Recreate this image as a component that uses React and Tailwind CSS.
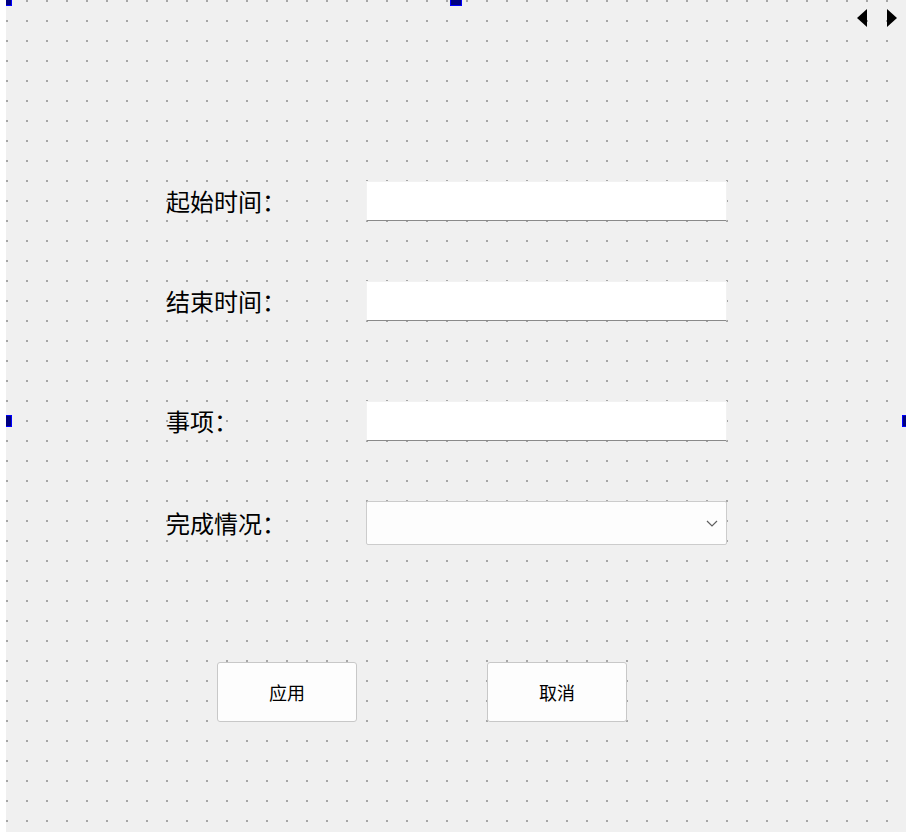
import React from "react";

const font = { fontFamily: '"Microsoft YaHei", "Noto Sans CJK SC", "Noto Sans", sans-serif' };

function Handle({ className }) {
  return <div className={"absolute border border-[#0000ff] bg-[#000080] " + className} />;
}

function Row({ label, children, className = "" }) {
  return (
    <div className={"flex items-center " + className}>
      <div className="w-[200px] text-[24px] leading-none text-black" style={font}>
        {label}
      </div>
      {children}
    </div>
  );
}

function TextInput() {
  return <div className="w-[361px] h-[40px] bg-white border border-[#f2f2f2] border-b-[#8a8a8a]" />;
}

export default function App() {
  return (
    <div className="w-[906px] h-[832px] bg-white flex">
      <div className="relative ml-[6px] w-[900px] h-[832px] bg-[#f0f0f0] overflow-hidden">
        <svg className="absolute inset-0" width="900" height="832" shapeRendering="crispEdges">
          <defs>
            <pattern id="dots" x="0" y="0" width="20" height="20" patternUnits="userSpaceOnUse">
              <rect x="0" y="0" width="2" height="2" fill="#a6a6a6" />
            </pattern>
          </defs>
          <rect width="900" height="832" fill="url(#dots)" />
        </svg>

        <div className="relative flex flex-col pl-[160px] pt-[181px]">
          <Row label="起始时间：">
            <TextInput />
          </Row>
          <Row label="结束时间：" className="mt-[60px]">
            <TextInput />
          </Row>
          <Row label="事项：" className="mt-[80px]">
            <TextInput />
          </Row>
          <Row label="完成情况：" className="mt-[60px]">
            <div className="w-[361px] h-[44px] bg-[#fdfdfd] border border-[#cccccc] rounded-[2px] flex items-center justify-end pr-[8px]">
              <svg width="12" height="7" viewBox="0 0 12 7">
                <path d="M1 1 L6 6 L11 1" fill="none" stroke="#5f5f5f" strokeWidth="1.2" />
              </svg>
            </div>
          </Row>
          <div className="flex mt-[117px] pl-[51px] gap-[130px]">
            <div
              className="w-[140px] h-[60px] bg-[#fdfdfd] border border-[#c8c8c8] rounded-[3px] flex items-center justify-center text-[18px] text-black"
              style={font}
            >
              应用
            </div>
            <div
              className="w-[140px] h-[60px] bg-[#fdfdfd] border border-[#c8c8c8] rounded-[3px] flex items-center justify-center text-[18px] text-black"
              style={font}
            >
              取消
            </div>
          </div>
        </div>

        <svg className="absolute left-[851px] top-[9px]" width="10" height="18" viewBox="0 0 10 18">
          <polygon points="10,0 10,18 0,9" fill="#000" />
        </svg>
        <svg className="absolute left-[881px] top-[9px]" width="10" height="18" viewBox="0 0 10 18">
          <polygon points="0,0 0,18 10,9" fill="#000" />
        </svg>

        <Handle className="left-[-1px] top-[-1px] w-[7px] h-[7px]" />
        <Handle className="left-[444px] top-[-1px] w-[12px] h-[7px]" />
        <Handle className="left-[-1px] top-[415px] w-[7px] h-[12px]" />
        <Handle className="left-[896px] top-[415px] w-[7px] h-[12px]" />
      </div>
    </div>
  );
}
